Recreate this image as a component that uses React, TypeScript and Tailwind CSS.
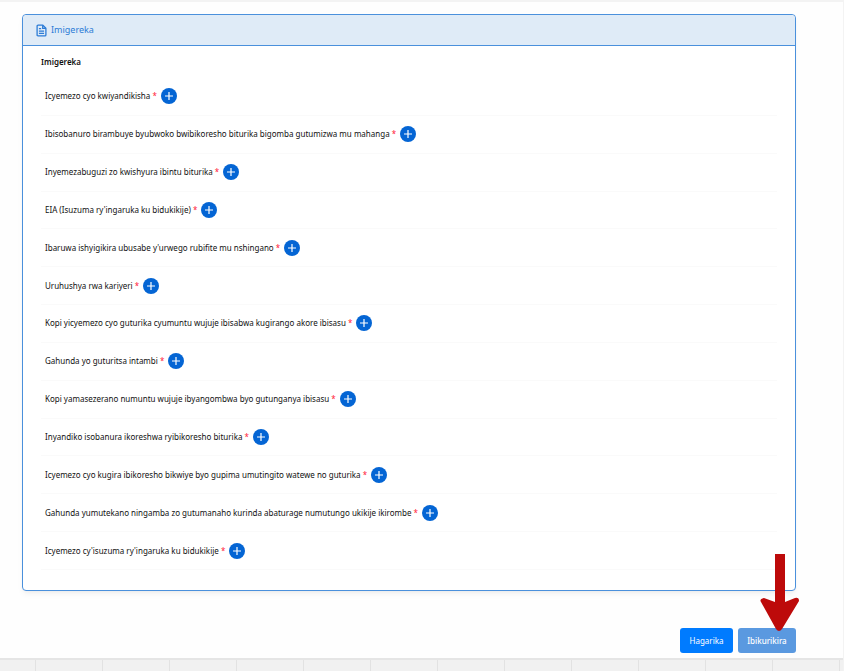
type Attachment = {
  id: number;
  name: string;
};

const attachments: Attachment[] = [
  { id: 1, name: "Icyemezo cyo kwiyandikisha" },
  { id: 2, name: "Ibisobanuro birambuye byubwoko bwibikoresho biturika bigomba gutumizwa mu mahanga" },
  { id: 3, name: "Inyemezabuguzi zo kwishyura ibintu biturika" },
  { id: 4, name: "EIA (Isuzuma ry'ingaruka ku bidukikije)" },
  { id: 5, name: "Ibaruwa ishyigikira ubusabe y'urwego rubifite mu nshingano" },
  { id: 6, name: "Uruhushya rwa kariyeri" },
  { id: 7, name: "Kopi yicyemezo cyo guturika cyumuntu wujuje ibisabwa kugirango akore ibisasu" },
  { id: 8, name: "Gahunda yo guturitsa intambi" },
  { id: 9, name: "Kopi yamasezerano numuntu wujuje ibyangombwa byo gutunganya ibisasu" },
  { id: 10, name: "Inyandiko isobanura ikoreshwa ryibikoresho biturika" },
  { id: 11, name: "Icyemezo cyo kugira ibikoresho bikwiye byo gupima umutingito watewe no guturika" },
  { id: 12, name: "Gahunda yumutekano ningamba zo gutumanaho kurinda abaturage numutungo ukikije ikirombe" },
  { id: 13, name: "Icyemezo cy'isuzuma ry'ingaruka ku bidukikije" },
];

const FileIcon = () => (
  <svg viewBox="0 0 12 14" className="h-[13px] w-[11px]" fill="none" stroke="currentColor" strokeWidth="1.4" strokeLinejoin="round" aria-hidden="true">
    <path d="M2.2 1.2h5.3l3.3 3.3v7.3q0 1-1 1H2.2q-1 0-1-1V2.2q0-1 1-1z" />
    <path d="M7.3 1.2v3.5h3.5M3.2 5h2.4M3.2 7.6h5.6M3.2 10.1h5.6" />
  </svg>
);

const AttachmentRow = ({ item }: { item: Attachment }) => (
  <li className="flex items-center gap-1 border-b border-[#fafafa] px-1 whitespace-nowrap">
    <span>
      {item.name} <span className="text-[#ff2038]">*</span>
    </span>
    <button
      type="button"
      aria-label={`Ongeraho: ${item.name}`}
      className="flex size-4 shrink-0 items-center justify-center rounded-full bg-[#0465d4] text-white"
    >
      <svg viewBox="0 0 16 16" className="size-4" fill="none" stroke="currentColor" strokeWidth="1.2">
        <path d="M8 4v8M4 8h8" />
      </svg>
    </button>
  </li>
);

export default function App() {
  return (
    <div className="flex min-h-screen flex-col border-t-2 border-r border-[#f3f3f3] bg-[#fefefe] font-['Noto_Sans',sans-serif] text-[8px] text-[#111111]">
      <main className="mr-[47px] ml-[22px] flex-1 pt-3">
        <section className="rounded border border-[#4a90dc] bg-white pb-5 shadow-md shadow-black/5">
          <header className="flex h-[31px] items-center gap-1 rounded-t border-b border-[#4a90dc] bg-[#dfebf7] px-[13px] text-[#2b7bd6]">
            <FileIcon />
            <h1 className="text-[9px]">Imigereka</h1>
          </header>
          <div className="px-[18px]">
            <h2 className="flex h-8 items-center font-semibold">Imigereka</h2>
            <ul className="grid min-h-[492px] auto-rows-fr">
              {attachments.map((item) => (
                <AttachmentRow key={item.id} item={item} />
              ))}
            </ul>
          </div>
        </section>

        <div className="relative mt-[37px] mb-1 flex justify-end gap-[5px]">
          <button type="button" className="h-[25px] w-[53px] rounded-[3px] bg-[#007bff] text-white">
            Hagarika
          </button>
          <button type="button" className="h-[25px] w-[58px] rounded-[3px] bg-[#5a99e0] font-medium text-white">
            Ibikurikira
          </button>
          {/* Flecha sobre el botón de continuar */}
          <svg
            viewBox="0 0 40 78"
            className="pointer-events-none absolute right-[-4px] bottom-[21px] h-[78px] w-10"
            fill="#bd0a0a"
            aria-hidden="true"
          >
            <path d="M15 0h10v48l10-4q4-1 4 3l-17 28q-3 4-6 0L1 48q-2-3 3-4l11 4z" />
          </svg>
        </div>
      </main>

      {/* Franja de celdas del pie */}
      <footer className="flex h-[13px] overflow-hidden border-t-2 border-[#e5e5e5] bg-[#f1f1f1]">
        <span className="w-9 shrink-0 border-r border-[#e2e2e2]" />
        {Array.from({ length: 12 }, (_, i) => (
          <span key={i} className="w-[67px] shrink-0 border-r border-[#e2e2e2]" />
        ))}
      </footer>
    </div>
  );
}
